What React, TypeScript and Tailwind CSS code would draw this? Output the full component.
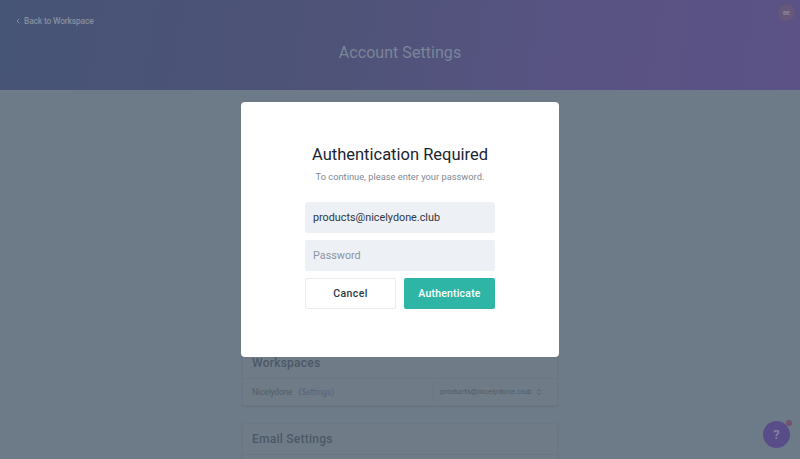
import { ChevronLeft, ChevronsUpDown } from "lucide-react";

const FONT = "font-['Roboto',sans-serif]";

function Header() {
  return (
    <header className="relative h-[90px] bg-[linear-gradient(100deg,#465475_0%,#4e5377_40%,#585383_70%,#5c5285_100%)]">
      <div className="flex items-start justify-between pl-[14px] pr-[5px] pt-[4px]">
        <a className="mt-[11px] flex items-center gap-[2px] text-[8.5px] font-medium leading-[12px] tracking-[-0.2px] text-[#858ea1]">
          <ChevronLeft size={8} strokeWidth={3} />
          Back to Workspace
        </a>
        <div className="flex h-[17px] w-[17px] items-center justify-center rounded-full bg-[#66587a] text-[6px] font-medium text-[#8f96a4]">
          BE
        </div>
      </div>
      <h1 className="mt-[14px] text-center text-[16px] font-normal leading-[24px] tracking-[0.05px] text-[#7a8599]">
        Account Settings
      </h1>
    </header>
  );
}

function Card({ title, children, className }: { title: string; children?: React.ReactNode; className?: string }) {
  return (
    <section className={`w-[316px] rounded-[2px] border border-[#6b7884] bg-[#6f7c88] shadow-[0_1px_1px_rgba(50,60,70,0.12)] ${className ?? ""}`}>
      <h2 className="border-b border-[#6a7783] px-[9px] pb-[7px] pt-[7px] text-[12px] font-medium leading-[16px] tracking-[0.25px] text-[#4b5866]">
        {title}
      </h2>
      {children}
    </section>
  );
}

function AuthModal() {
  return (
    <div className="absolute inset-0 flex justify-center pt-[102px]">
      <div className="flex h-[255px] w-[318px] flex-col items-center rounded-[4px] bg-white pt-[42px]">
        <h2 className="text-[16.5px] font-normal leading-[22px] text-[#1b2530]">
          Authentication Required
        </h2>
        <p className="mt-[5px] text-[9.3px] leading-[12px] text-[#7f8a96]">
          To continue, please enter your password.
        </p>
        <form className="mt-[19px] flex w-[190px] flex-col gap-[7px]">
          <input
            readOnly
            value="products@nicelydone.club"
            className="h-[31px] w-full rounded-[2px] bg-[#edf0f5] px-[8px] text-[10.8px] text-[#2c3744] outline-none"
          />
          <input
            readOnly
            placeholder="Password"
            className="h-[31px] w-full rounded-[2px] bg-[#edf0f5] px-[8px] text-[10.8px] outline-none placeholder:text-[#8b95a1]"
          />
          <div className="flex justify-between">
            <button type="button" className="h-[31px] w-[91px] rounded-[2px] border border-[#e8ecf1] bg-white text-[10.5px] font-medium tracking-[0.4px] text-[#2c3744]">
              Cancel
            </button>
            <button type="button" className="h-[31px] w-[91px] rounded-[2px] bg-[#2eb5a5] text-[10.5px] font-medium tracking-[0.2px] text-white">
              Authenticate
            </button>
          </div>
        </form>
      </div>
    </div>
  );
}

export default function App() {
  return (
    <div className={`relative h-[459px] w-[800px] overflow-hidden bg-[#6d7b88] ${FONT}`}>
      <Header />
      <main className="flex flex-col items-center gap-[17px] pt-[20px]">
        <Card title="Account" className="h-[220px]" />
        <Card title="Workspaces">
          <div className="flex h-[26px] items-center justify-between pl-[9px] text-[8.2px] text-[#4f5c69]">
            <span>
              Nicelydone
              <span className="ml-[6px]">
                (<span className="text-[#55627f]">Settings</span>)
              </span>
            </span>
            <div className="mr-[9px] flex h-[22px] w-[115px] items-center justify-between border-l border-[#6a7783] pl-[6px] pr-[5px] text-[7.8px] text-[#4f5c69]">
              products@nicelydone.club
              <ChevronsUpDown size={8} strokeWidth={2.5} />
            </div>
          </div>
        </Card>
        <Card title="Email Settings" className="h-[60px]" />
      </main>
      <AuthModal />
      <button className="absolute bottom-[11px] right-[10px] flex h-[27px] w-[27px] items-center justify-center rounded-full bg-[#594d89] text-[13px] font-medium text-[#8688a8]">
        ?
        <span className="absolute right-[-2px] top-[-1px] h-[6px] w-[6px] rounded-full bg-[#74516c]" />
      </button>
    </div>
  );
}
